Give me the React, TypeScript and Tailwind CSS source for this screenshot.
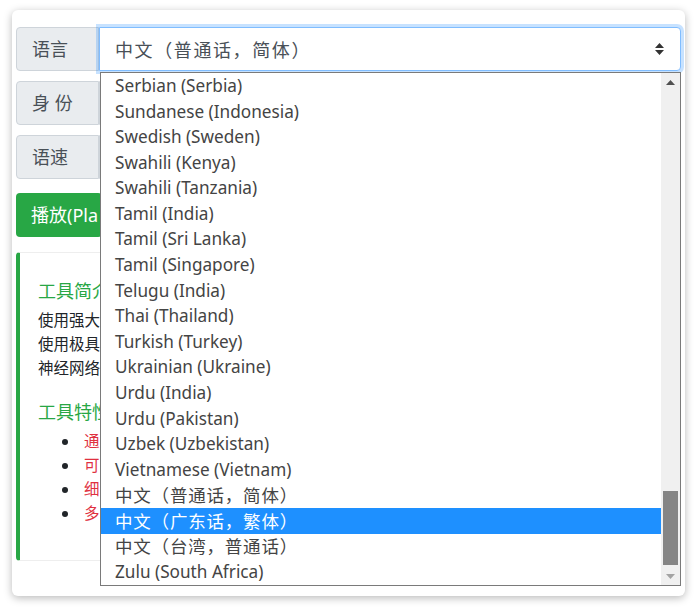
const FONT = { fontFamily: '"Noto Sans", "Noto Sans CJK SC", sans-serif' }
const CJK = { fontFamily: '"Noto Sans CJK SC", "Noto Sans", sans-serif' }

const languages = [
  'Serbian (Serbia)',
  'Sundanese (Indonesia)',
  'Swedish (Sweden)',
  'Swahili (Kenya)',
  'Swahili (Tanzania)',
  'Tamil (India)',
  'Tamil (Sri Lanka)',
  'Tamil (Singapore)',
  'Telugu (India)',
  'Thai (Thailand)',
  'Turkish (Turkey)',
  'Ukrainian (Ukraine)',
  'Urdu (India)',
  'Urdu (Pakistan)',
  'Uzbek (Uzbekistan)',
  'Vietnamese (Vietnam)',
  '中文（普通话，简体）',
  '中文（广东话，繁体）',
  '中文（台湾，普通话）',
  'Zulu (South Africa)',
]

const isCjk = (s: string) => /[\u4e00-\u9fff]/.test(s)

function Row({ label, children }: { label: string; children: React.ReactNode }) {
  return (
    <div className="flex h-[44px]">
      <div className="w-[83px] shrink-0 flex items-center pl-[15px] bg-[#e9ecef] border border-[#ced4da] rounded-l-[4px] text-[18px] text-[#495057]">
        {label}
      </div>
      {children}
    </div>
  )
}

export default function App() {
  const selected = 17

  return (
    <div className="w-[700px] h-[610px] bg-white pt-[10px] pl-[12px]" style={FONT}>
      <div className="relative w-[673px] h-[586px] bg-white rounded-[6px] shadow-[0_2px_8px_rgba(0,0,0,0.28)] px-[4px] pt-[17px] overflow-hidden">
        <div className="flex flex-col gap-[10px]">
          <Row label="语言">
            <div className="flex-1 flex items-center justify-between pl-[15px] pr-[16px] bg-white border border-[#80bdff] rounded-r-[4px] shadow-[0_0_0_3px_rgba(0,123,255,0.22)] text-[18px] text-[#495057]">
              <span style={CJK} className="tracking-[1.6px]">中文（普通话，简体）</span>
              <svg width="9" height="12" viewBox="0 0 9 12">
                <path d="M4.5 0 L9 5 H0 Z M0 7 H9 L4.5 12 Z" fill="#333" />
              </svg>
            </div>
          </Row>
          <Row label="身 份">
            <div className="flex-1 bg-white border border-[#ced4da] rounded-r-[4px]" />
          </Row>
          <Row label="语速">
            <div className="flex-1 bg-white border border-[#ced4da] rounded-r-[4px]" />
          </Row>
        </div>

        <button className="mt-[14px] h-[44px] pl-[15px] pr-[4px] bg-[#28a745] text-white text-[18px] rounded-[4px] flex items-center">
          播放(Pla
        </button>

        <div className="mt-[15px] h-[309px] border border-l-[4px] border-[#eeeeee] border-l-[#28a745] rounded-[4px] pl-[18px] pt-[25px]">
          <div className="text-[18px] text-[#28a745] leading-[26px]">工具简介</div>
          <div className="mt-[4px] text-[15.5px] leading-[24px] text-[#212529]">
            <div>使用强大</div>
            <div>使用极具</div>
            <div>神经网络</div>
          </div>
          <div className="mt-[19px] text-[18px] text-[#28a745] leading-[26px]">工具特性</div>
          <ul className="mt-[4px] ml-[42px] list-disc text-[15.5px] leading-[24px] text-[#e0303f] marker:text-[#212529]">
            <li className="pl-[4px]">通</li>
            <li className="pl-[4px]">可</li>
            <li className="pl-[4px]">细</li>
            <li className="pl-[4px]">多</li>
          </ul>
        </div>

        <div className="absolute left-[88px] top-[62px] w-[581px] h-[514px] bg-white border border-[#7a7a7a] flex">
          <div className="flex-1">
            {languages.map((l, i) => (
              <div
                key={l}
                style={isCjk(l) ? CJK : undefined}
                className={
                  'h-[25.6px] flex items-center pl-[14px] ' +
                  (isCjk(l) ? 'text-[17.5px] tracking-[0.8px] ' : 'text-[17.2px] ') +
                  (i === selected ? 'bg-[#1e90ff] text-white' : 'text-[#444]')
                }
              >
                {l}
              </div>
            ))}
          </div>
          <div className="w-[19px] bg-[#f0f0f0] flex flex-col items-center">
            <div className="h-[18px] flex items-center justify-center">
              <svg width="9" height="5" viewBox="0 0 9 5">
                <path d="M4.5 0 L9 5 H0 Z" fill="#505050" />
              </svg>
            </div>
            <div className="flex-1" />
            <div className="w-[15px] h-[74px] bg-[#858585] mb-[20px]" />
          </div>
          <div className="absolute right-[5px] bottom-[6px]">
            <svg width="9" height="5" viewBox="0 0 9 5">
              <path d="M0 0 H9 L4.5 5 Z" fill="#a3a3a3" />
            </svg>
          </div>
        </div>
      </div>
    </div>
  )
}
